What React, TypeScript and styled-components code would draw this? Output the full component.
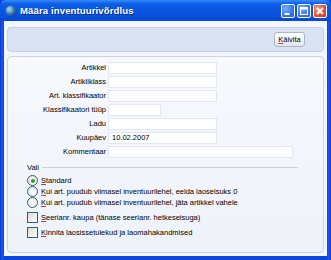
import { Fragment } from 'react'
import styled, { createGlobalStyle } from 'styled-components'

const GlobalStyle = createGlobalStyle`
    html, body {
        margin: 0;
        padding: 0;
        background: #ffffff;
    }
    * {
        box-sizing: border-box;
    }
`

const Window = styled.div`
    width: 331px;
    height: 260px;
    display: flex;
    flex-direction: column;
    background: linear-gradient(to right, #0831d9, #1a5ee8 2px, #0a45dc 4px, #0a45dc 327px, #1a5ee8 329px, #0831d9);
    font-family: 'Liberation Sans', Arial, sans-serif;
    overflow: hidden;
`

const TitleBar = styled.div`
    height: 21px;
    flex: none;
    display: flex;
    align-items: center;
    padding: 0 4px 0 5px;
    gap: 3px;
    border-radius: 6px 6px 0 0;
    background: linear-gradient(
        to bottom,
        #3a8cf9 0%,
        #0c5fe8 18%,
        #0a55e0 50%,
        #0650dd 80%,
        #0a46c8 100%
    );
`

const TitleText = styled.span`
    flex: 1;
    color: #ffffff;
    font-weight: bold;
    font-size: 9.6px;
    letter-spacing: 0.1px;
    text-shadow: 1px 1px 0 #0a2a8a;
    white-space: nowrap;
`

const TitleButtons = styled.div`
    display: flex;
    gap: 2px;
    margin-top: 1px;
`

const CaptionButton = styled.div<{ $close?: boolean }>`
    width: 14px;
    height: 14px;
    border: 1px solid #ffffff;
    border-radius: 2px;
    display: flex;
    align-items: center;
    justify-content: center;
    background: ${({ $close }) =>
        $close
            ? 'radial-gradient(circle at 30% 30%, #f39a7f, #e25535 55%, #c2381a)'
            : 'radial-gradient(circle at 30% 30%, #7fb0fb, #3a7af0 55%, #2459d8)'};
`

const Client = styled.div`
    flex: 1;
    margin: 0 4px 4px 4px;
    background: #f3f6fc;
    padding: 6px 3px 3px 3px;
    display: flex;
    flex-direction: column;
    gap: 4px;
`

const Toolbar = styled.div`
    height: 25px;
    flex: none;
    display: flex;
    align-items: center;
    justify-content: flex-end;
    padding-right: 18px;
    border: 1px solid #c2d0e8;
    border-radius: 4px;
    background: #d9e3f3;
`

const PushButton = styled.button`
    width: 31px;
    height: 15px;
    padding: 0;
    border: 1px solid #a8b6cf;
    border-radius: 3px;
    background: linear-gradient(to bottom, #ffffff, #f2f4f8 60%, #dfe4ee);
    font-family: 'Liberation Sans', Arial, sans-serif;
    font-size: 7.5px;
    color: #000000;
`

const Panel = styled.div`
    flex: 1;
    border: 1px solid #c6d3ea;
    border-radius: 4px;
    background: linear-gradient(to bottom, #f7f9fd, #eef2fa);
    padding-top: 5px;
`

const FormGrid = styled.div`
    display: grid;
    grid-template-columns: 98px 1fr;
    column-gap: 2px;
    row-gap: 2px;
    align-items: center;
`

const Label = styled.span`
    text-align: right;
    font-size: 7.5px;
    color: #000000;
    white-space: nowrap;
    line-height: 12px;
`

const Field = styled.div<{ $width: number }>`
    width: ${({ $width }) => $width}px;
    height: 12px;
    background: #ffffff;
    border: 1px solid #e2e8f3;
    font-size: 7.5px;
    line-height: 10px;
    padding-left: 3px;
    color: #000000;
`

const Group = styled.div`
    margin: 5px 0 0 19px;
    width: 271px;
`

const GroupTitle = styled.div`
    display: flex;
    align-items: center;
    gap: 3px;
    font-size: 7.5px;
    height: 9px;
    &::after {
        content: '';
        flex: 1;
        height: 1px;
        background: #c9d2e0;
    }
`

const Options = styled.div`
    display: flex;
    flex-direction: column;
    margin-top: 3px;
`

const Option = styled.div<{ $gap?: number }>`
    display: flex;
    align-items: center;
    gap: 3px;
    height: 11px;
    margin-top: ${({ $gap }) => $gap ?? 0}px;
    font-size: 7.5px;
    white-space: nowrap;
`

const Radio = styled.span<{ $on?: boolean }>`
    width: 11px;
    height: 11px;
    flex: none;
    border-radius: 50%;
    border: 1px solid #2c5d92;
    background: radial-gradient(circle at 60% 60%, #ffffff, #e4e2d8);
    display: flex;
    align-items: center;
    justify-content: center;
    &::after {
        content: '';
        display: ${({ $on }) => ($on ? 'block' : 'none')};
        width: 4px;
        height: 4px;
        border-radius: 50%;
        background: #24a524;
    }
`

const Check = styled.span`
    width: 11px;
    height: 11px;
    flex: none;
    border: 1px solid #2c5d92;
    background: linear-gradient(135deg, #dcdbd3, #ffffff);
`

const Key = styled.span`
    text-decoration: underline;
    text-decoration-color: #e03030;
`

const Globe = () => (
    <svg width='12' height='12' viewBox='0 0 12 12'>
        <defs>
            <radialGradient id='g' cx='35%' cy='35%' r='70%'>
                <stop offset='0' stopColor='#cfe6ff' />
                <stop offset='0.5' stopColor='#3f86c9' />
                <stop offset='1' stopColor='#1b3f7a' />
            </radialGradient>
        </defs>
        <circle cx='6' cy='6' r='5.5' fill='url(#g)' />
        <path d='M3 4c1 1 2 0 3 1s0 2 1 3' stroke='#7fc07a' strokeWidth='1' fill='none' />
    </svg>
)

const rows: { label: string; width: number; value?: string }[] = [
    { label: 'Artikkel', width: 109 },
    { label: 'Artikliklass', width: 109 },
    { label: 'Art. klassifikaator', width: 109 },
    { label: 'Klassifikaatori tüüp', width: 53 },
    { label: 'Ladu', width: 109 },
    { label: 'Kuupäev', width: 109, value: '10.02.2007' },
    { label: 'Kommentaar', width: 185 },
]

// first letter is the access key, underlined in red
const Accel = ({ text }: { text: string }) => (
    <span>
        <Key>{text[0]}</Key>
        {text.slice(1)}
    </span>
)

export default function App() {
    return (
        <>
            <GlobalStyle />
            <Window>
                <TitleBar>
                    <Globe />
                    <TitleText>Määra inventuurivõrdlus</TitleText>
                    <TitleButtons>
                        <CaptionButton>
                            <svg width='10' height='10' viewBox='0 0 10 10'>
                                <rect x='1.5' y='7' width='5' height='2' fill='#fff' />
                            </svg>
                        </CaptionButton>
                        <CaptionButton>
                            <svg width='10' height='10' viewBox='0 0 10 10'>
                                <rect x='1.5' y='1.5' width='7' height='7' fill='none' stroke='#fff' strokeWidth='1' />
                                <rect x='1.5' y='1.5' width='7' height='2' fill='#fff' />
                            </svg>
                        </CaptionButton>
                        <CaptionButton $close>
                            <svg width='10' height='10' viewBox='0 0 10 10'>
                                <path d='M2 2L8 8M8 2L2 8' stroke='#fff' strokeWidth='1.8' />
                            </svg>
                        </CaptionButton>
                    </TitleButtons>
                </TitleBar>
                <Client>
                    <Toolbar>
                        <PushButton type='button'>
                            <Accel text='Käivita' />
                        </PushButton>
                    </Toolbar>
                    <Panel>
                        <FormGrid>
                            {rows.map((r) => (
                                <Fragment key={r.label}>
                                    <Label>{r.label}</Label>
                                    <Field $width={r.width}>{r.value}</Field>
                                </Fragment>
                            ))}
                        </FormGrid>
                        <Group>
                            <GroupTitle>Vali</GroupTitle>
                            <Options>
                                <Option>
                                    <Radio $on />
                                    <Accel text='Standard' />
                                </Option>
                                <Option>
                                    <Radio />
                                    <Accel text='Kui art. puudub viimasel inventuurilehel, eelda laoseisuks 0' />
                                </Option>
                                <Option>
                                    <Radio />
                                    <Accel text='Kui art. puudub viimasel inventuurilehel, jäta artikkel vahele' />
                                </Option>
                                <Option $gap={4}>
                                    <Check />
                                    <Accel text='Seerianr. kaupa (tänase seerianr. hetkeseisuga)' />
                                </Option>
                                <Option $gap={4}>
                                    <Check />
                                    <Accel text='Kinnita laosissetulekud ja laomahakandmised' />
                                </Option>
                            </Options>
                        </Group>
                    </Panel>
                </Client>
            </Window>
        </>
    )
}
